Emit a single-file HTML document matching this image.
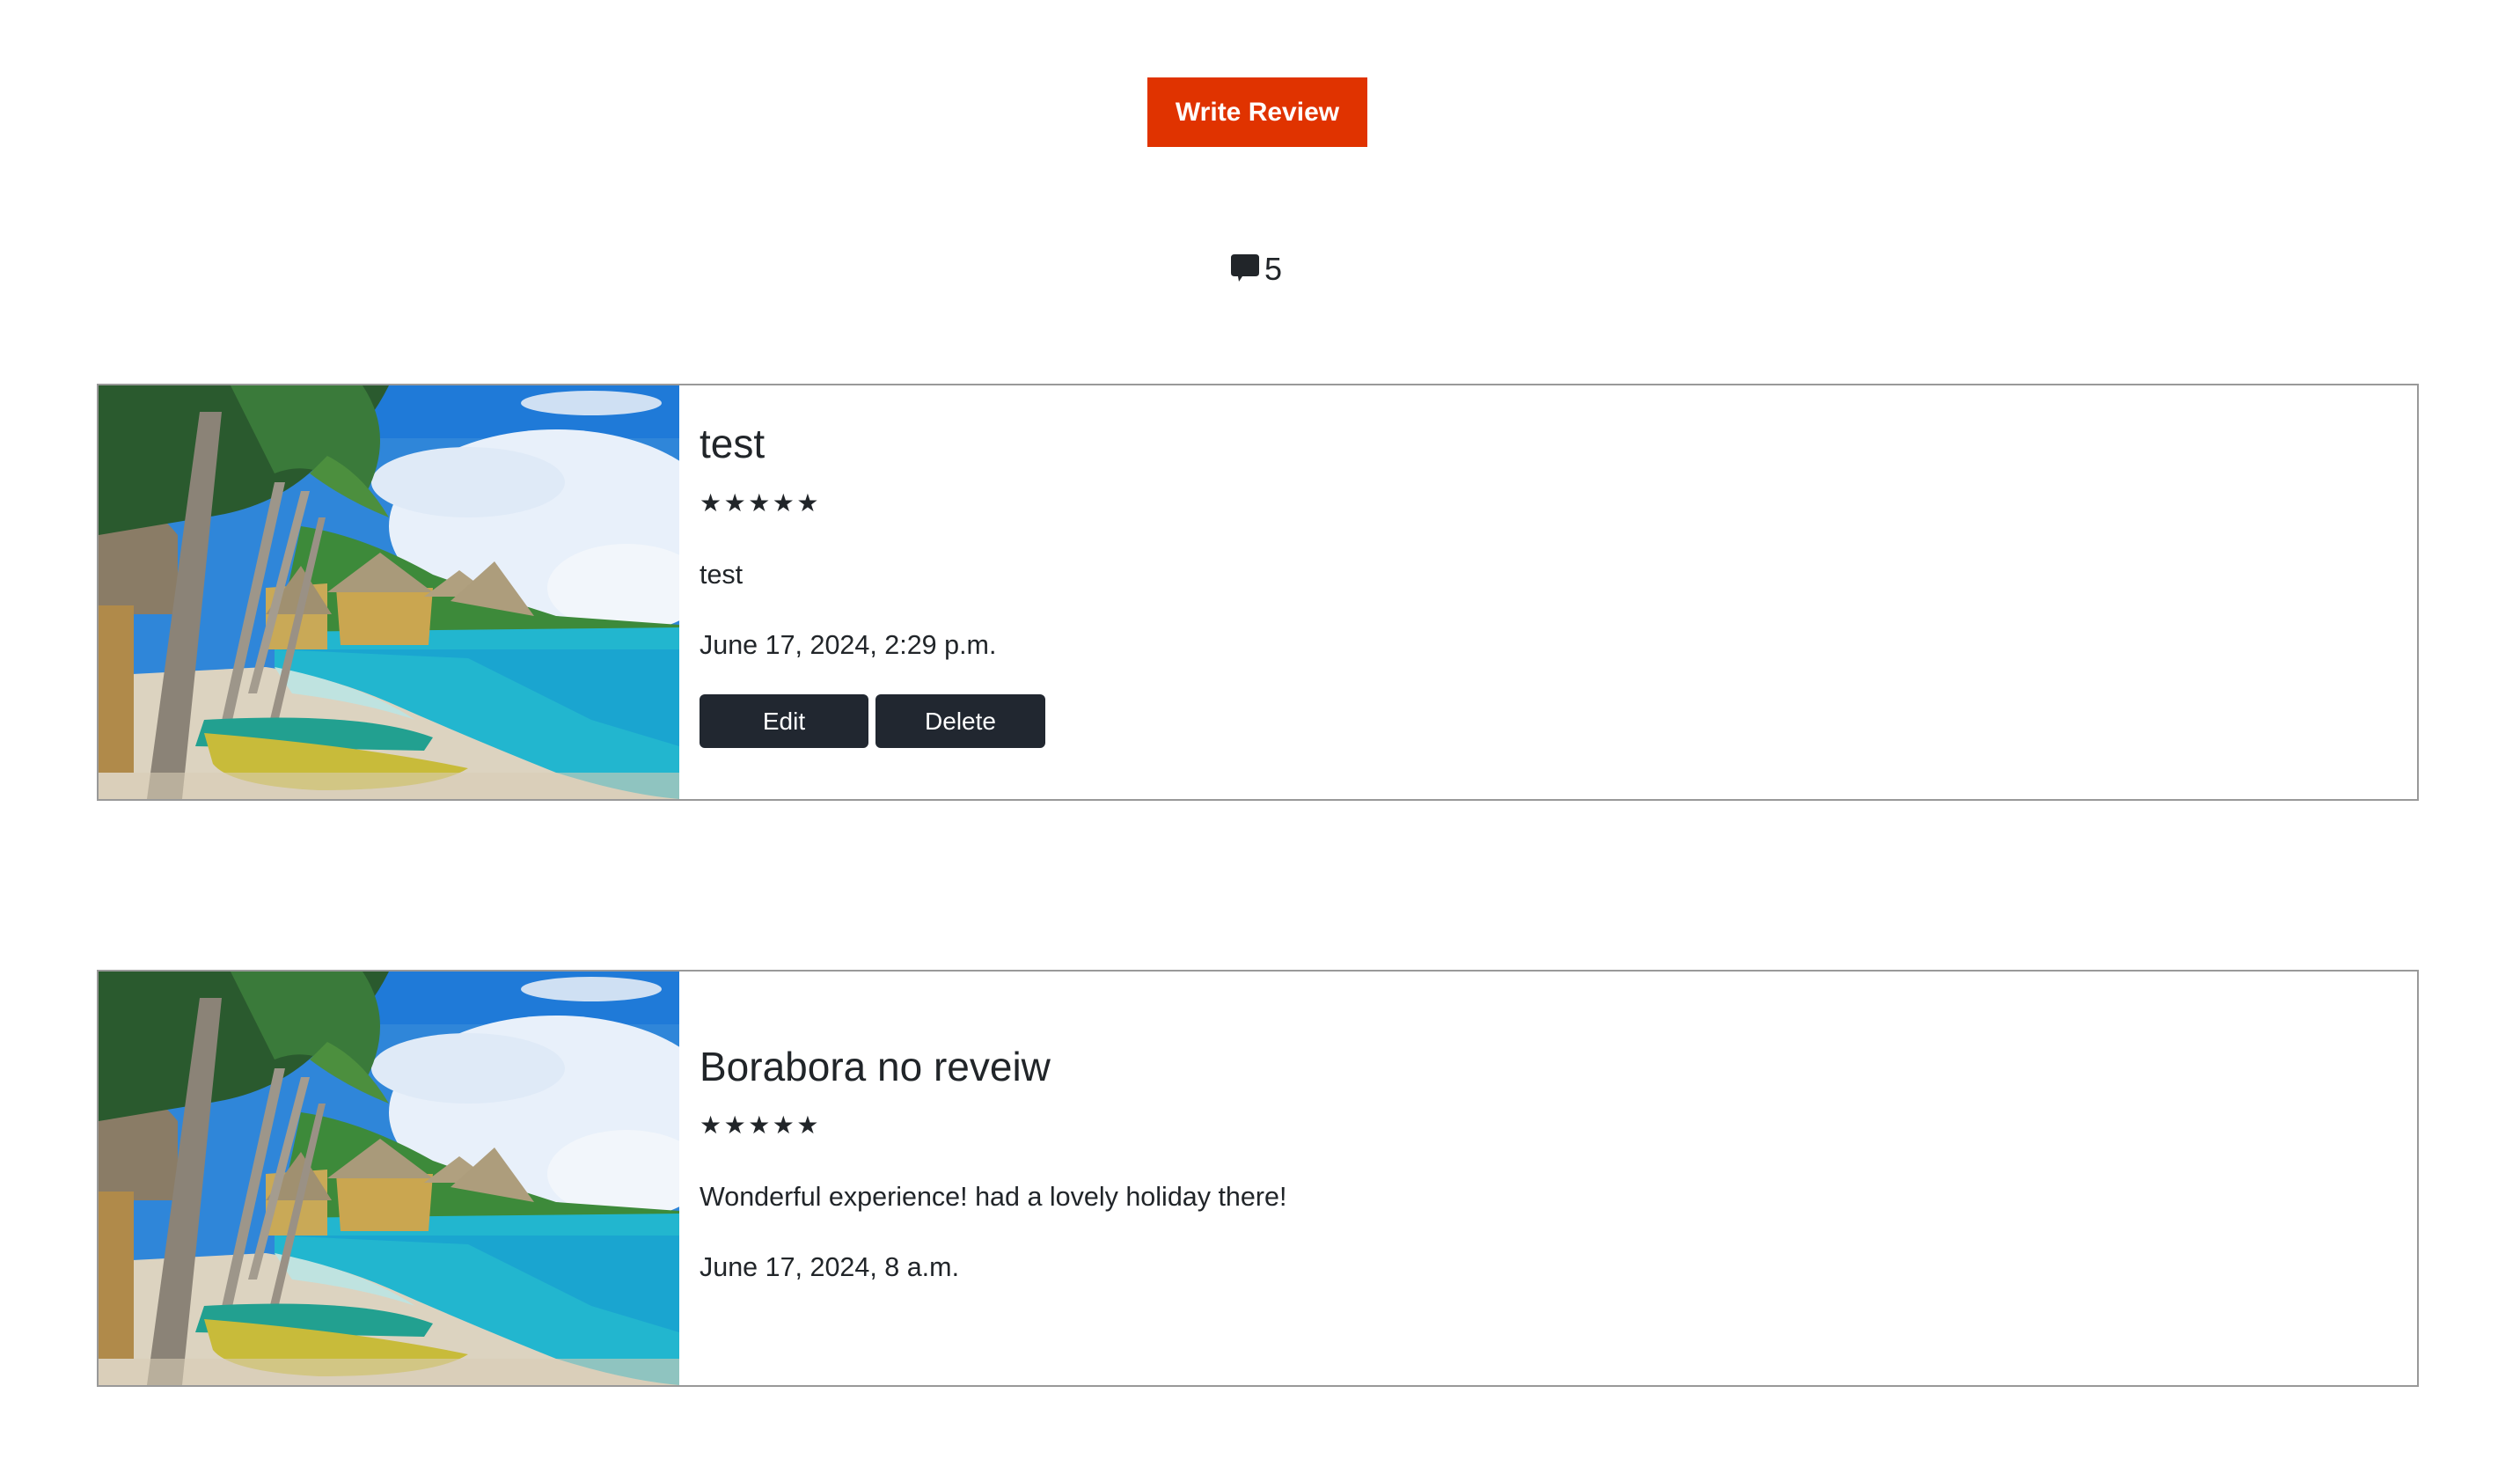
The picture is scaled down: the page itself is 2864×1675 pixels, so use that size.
<!DOCTYPE html>
<html><head><meta charset="utf-8">
<style>
html,body{margin:0;padding:0;background:#fff;}
body{width:2864px;height:1675px;position:relative;overflow:hidden;font-family:"Liberation Sans",Arial,sans-serif;color:#212529;}
.abs{position:absolute;white-space:nowrap;line-height:1;}
.wr{left:1304px;top:88px;width:250px;height:79px;background:#e03300;color:#fff;font-weight:bold;font-size:30px;display:flex;align-items:center;justify-content:center;}
.card{position:absolute;left:110px;width:2635px;height:470px;border:2px solid #999;}
.img{position:absolute;left:0;top:0;width:660px;height:470px;}
.t{font-size:46px;}
.s{font-family:"DejaVu Sans",sans-serif;font-size:28px;letter-spacing:2.5px;}
.p{font-size:30.5px;}
.btn{position:absolute;top:789px;height:61px;background:#212730;color:#fff;border-radius:6px;font-size:28px;display:flex;align-items:center;justify-content:center;}
</style></head><body>

<div class="abs wr">Write Review</div>

<svg class="abs" style="left:1399px;top:289px" width="33" height="32" viewBox="0 0 33 32">
<path d="M4 0H28Q32 0 32 4V21Q32 25 28 25H13L9 31L8 25H4Q0 25 0 21V4Q0 0 4 0Z" fill="#212529"/>
</svg>
<div class="abs" style="left:1437px;top:288px;font-size:36px;">5</div>

<svg width="0" height="0" style="position:absolute">
<defs>
<symbol id="beach" viewBox="0 0 660 470">
<rect width="660" height="470" fill="#2f86d9"/>
<rect x="280" y="0" width="380" height="60" fill="#1f7ad8"/>
<ellipse cx="520" cy="160" rx="190" ry="110" fill="#e8f0fa"/>
<ellipse cx="420" cy="110" rx="110" ry="40" fill="#dfeaf7"/>
<ellipse cx="600" cy="230" rx="90" ry="50" fill="#f2f6fb"/>
<ellipse cx="560" cy="20" rx="80" ry="14" fill="#cfe0f3"/>
<path d="M230 160Q300 170 380 215Q450 240 520 262L660 272L660 285L200 300Z" fill="#3d8a3a"/>
<path d="M200 280L660 275L660 470L200 470Z" fill="#22b6cf"/>
<path d="M200 300L420 310L560 380L660 410L660 300Z" fill="#1aa5d0"/>
<path d="M190 320Q260 330 330 360Q420 400 520 440Q600 465 660 470L0 470L0 330Z" fill="#dcd3c0"/>
<path d="M200 320Q300 340 360 380Q300 360 220 350Z" fill="#bfe3e0"/>
<path d="M190 230L260 225L260 300L190 300Z" fill="#c9a957"/>
<path d="M270 230L380 230L375 295L275 295Z" fill="#caa650"/>
<path d="M260 235L320 190L380 235Z" fill="#a99a7a"/>
<path d="M370 240L410 210L450 240Z" fill="#b0a07f"/>
<path d="M400 245L450 200L495 262Z" fill="#ad9d7c"/>
<path d="M190 260L230 205L265 260Z" fill="#a09070"/>
<path d="M0 140Q50 120 90 170L90 260L0 260Z" fill="#8a7c66"/>
<path d="M0 250L40 250L40 440L0 440Z" fill="#b08a4a"/>
<path d="M0 0L330 0Q300 60 250 90Q200 140 120 150Q60 160 0 170Z" fill="#2a5a2e"/>
<path d="M150 0L300 0Q340 60 300 130Q250 80 200 100Z" fill="#3a7a3a"/>
<path d="M240 100Q280 130 330 150Q300 100 260 80Z" fill="#4c8f3e"/>
<path d="M115 30L140 30L95 470L55 470Z" fill="#8b8377"/>
<path d="M200 110L212 110L150 390L138 390Z" fill="#9d968a"/>
<path d="M230 120L240 120L180 350L170 350Z" fill="#a49c8f"/>
<path d="M250 150L258 150L200 400L190 400Z" fill="#9a9185"/>
<path d="M120 380Q300 370 380 400L370 415L110 410Z" fill="#22a090"/>
<path d="M120 395Q300 410 420 435Q380 460 250 460Q150 455 130 430Z" fill="#c8bb3a"/>
<rect x="0" y="440" width="660" height="30" fill="#d8cdb6" opacity="0.6"/>
</symbol>
</defs>
</svg>

<div class="card" style="top:436px;">
  <svg class="img" viewBox="0 0 660 470" preserveAspectRatio="none"><use href="#beach"/></svg>
</div>
<div class="abs t" style="left:795px;top:481px;">test</div>
<div class="abs s" style="left:795px;top:558px;">★★★★★</div>
<div class="abs p" style="left:795px;top:638px;">test</div>
<div class="abs p" style="left:795px;top:718px;">June 17, 2024, 2:29 p.m.</div>
<div class="btn" style="left:795px;width:192px;">Edit</div>
<div class="btn" style="left:995px;width:193px;">Delete</div>

<div class="card" style="top:1102px;">
  <svg class="img" viewBox="0 0 660 470" preserveAspectRatio="none"><use href="#beach"/></svg>
</div>
<div class="abs t" style="left:795px;top:1189px;">Borabora no reveiw</div>
<div class="abs s" style="left:795px;top:1265px;">★★★★★</div>
<div class="abs p" style="left:795px;top:1345px;">Wonderful experience! had a lovely holiday there!</div>
<div class="abs p" style="left:795px;top:1425px;">June 17, 2024, 8 a.m.</div>

</body></html>
